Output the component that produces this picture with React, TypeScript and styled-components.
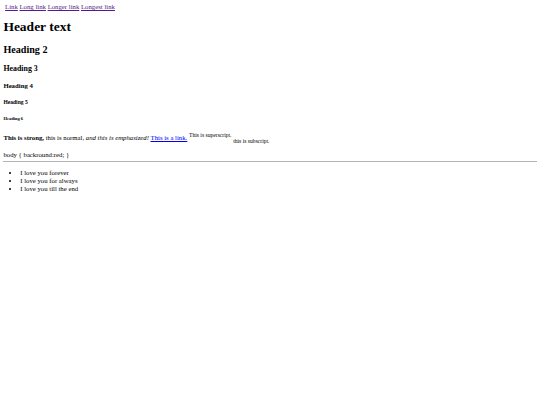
import * as React from 'react';
import styled, { createGlobalStyle } from 'styled-components';

// the reference is a 1280x960 default page shrunk to 540x405
const GlobalStyle = createGlobalStyle`
  html, body {
    margin: 0;
    padding: 0;
    background: #fff;
  }
`;

const Page = styled.div`
  zoom: 0.421875;
  width: 1280px;
  min-height: 960px;
  box-sizing: border-box;
  padding: 8px;
  font-family: "Liberation Serif", "Times New Roman", serif;
  font-size: 16px;
  color: #000;
  display: flow-root;
`;

const Nav = styled.nav`
  display: block;
  padding-left: 4px;
`;

const NavLink = styled.a<{ $visited?: boolean }>`
  color: ${(p) => (p.$visited ? '#551a8b' : '#0000ee')};
  text-decoration: underline;
  cursor: pointer;
`;

const Heading = styled.div<{ $size: number; $margin: number }>`
  display: block;
  font-weight: bold;
  font-size: ${(p) => p.$size}em;
  margin: ${(p) => p.$margin}em 0;
`;

const Para = styled.p`
  margin: 1em 0;
`;

const Snippet = styled.div`
  display: block;
`;

const Rule = styled.hr`
  margin: 0.55em 0 0.5em;
  border: 0;
  border-top: 2px solid #b4b4b4;
  height: 0;
`;

const List = styled.ul`
  margin: 1em 0;
  padding-left: 40px;
  list-style: disc;
  line-height: 1.2;
`;

const headings = [
  { tag: 'h1', text: 'Header text', size: 2, margin: 0.67 },
  { tag: 'h2', text: 'Heading 2', size: 1.5, margin: 0.83 },
  { tag: 'h3', text: 'Heading 3', size: 1.17, margin: 1 },
  { tag: 'h4', text: 'Heading 4', size: 1, margin: 1.33 },
  { tag: 'h5', text: 'Heading 5', size: 0.83, margin: 1.75 },
  { tag: 'h6', text: 'Heading 6', size: 0.67, margin: 2.5 },
];

const links = ['Link', 'Long link', 'Longer link', 'Longest link'];

const songs = ['I love you forever', 'I love you for always', 'I love you till the end'];

const App = () => {
  return (
    <>
      <GlobalStyle />
      <Page>
        <Nav>
          {links.map((l, i) => (
            <React.Fragment key={l}>
              {i > 0 && ' '}
              <NavLink $visited>{l}</NavLink>
            </React.Fragment>
          ))}
        </Nav>
        {headings.map((h) => (
          <Heading key={h.tag} as={h.tag as any} $size={h.size} $margin={h.margin}>
            {h.text}
          </Heading>
        ))}
        <Para>
          <strong>This is strong,</strong> this is normal, <em>and this is emphasized!</em>{' '}
          <NavLink>This is a link.</NavLink> <sup>This is superscript.</sup>{' '}
          <sub>this is subscript.</sub>
        </Para>
        <Snippet>body {'{'} backround:red; {'}'}</Snippet>
        <Rule />
        <List>
          {songs.map((s) => (
            <li key={s}>{s}</li>
          ))}
        </List>
      </Page>
    </>
  );
};

export default App;
